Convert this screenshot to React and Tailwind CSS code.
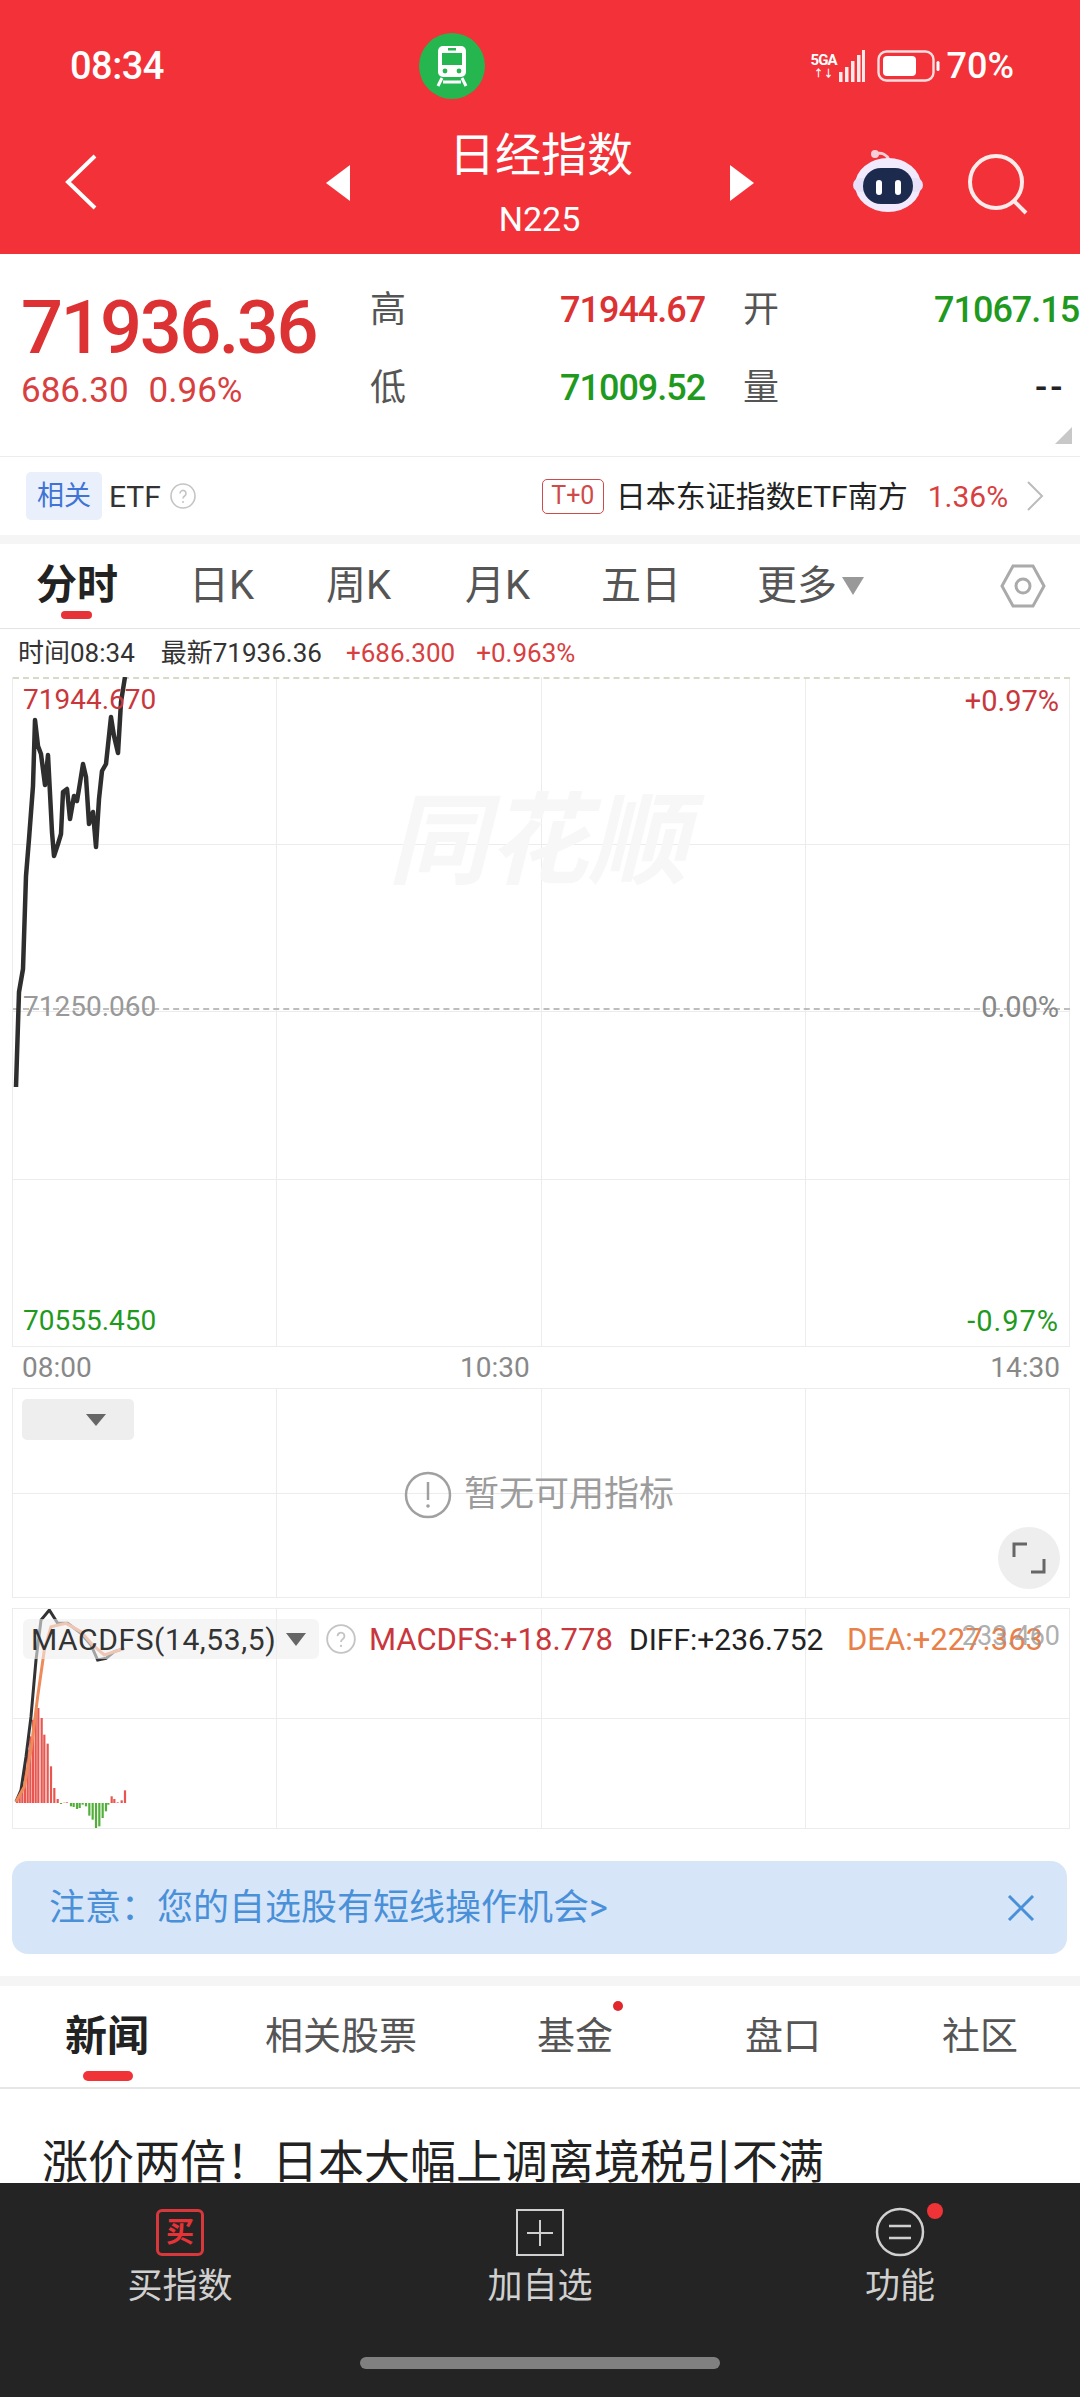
import React from "react";

const linePts =
  "15,1088 18,993 22,970 25,877 28,840 32,787 34,721 37,747 40,755 44,786 47,756 51,833 53,857 57,845 60,835 62,793 66,790 69,820 73,797 76,802 78,790 82,765 85,778 88,825 92,813 95,848 98,800 101,772 105,765 110,718 113,737 117,754 120,703 124,678";

// macd bars: [x, height] in zoomed px (3x), baseline at y=1803
const macdBars = [
  [48, 10], [56, 30], [64, 60], [72, 110], [80, 160], [88, 200], [96, 250], [104, 270], [112, 285],
  [122, 255], [130, 205], [140, 178], [150, 110], [160, 45], [170, 12], [180, -3], [190, 1], [198, 2],
  [210, -10], [218, -12], [228, -18], [236, -15], [245, -5], [255, -10], [265, -38], [275, -50],
  [285, -75], [295, -70], [305, -45], [315, -25], [322, -5], [332, 20], [340, 12], [350, 2], [362, 8], [372, 38],
];

const toPts = (arr) => arr.map(([x, y]) => `${x / 3},${1590 + y / 3}`).join(" ");
const diffLine = toPts([[45, 635], [60, 600], [75, 500], [90, 380], [105, 210], [120, 90], [145, 60], [170, 100], [200, 100], [240, 130], [270, 165], [290, 210], [315, 205], [340, 185], [370, 175]]);
const deaLine = toPts([[45, 635], [70, 590], [90, 480], [110, 320], [130, 180], [150, 110], [195, 100], [240, 125], [275, 165], [310, 195], [370, 175]]);

function GridCells({ rows }) {
  const cells = [];
  for (let i = 0; i < rows * 4; i++) {
    cells.push(<div key={i} className="border-r border-b border-[#ececec]" />);
  }
  return <>{cells}</>;
}

function HelpIcon({ size = 26 }) {
  return (
    <svg width={size} height={size} viewBox="0 0 26 26" className="shrink-0">
      <circle cx="13" cy="13" r="12" fill="none" stroke="#c4c4c4" strokeWidth="1.6" />
      <path d="M10 10.5a3 3 0 1 1 4.6 2.5c-1 .7-1.6 1.2-1.6 2.5" fill="none" stroke="#c4c4c4" strokeWidth="1.6" />
      <circle cx="13" cy="19" r="1" fill="#c4c4c4" />
    </svg>
  );
}

function StatusBar() {
  return (
    <div className="h-[132px] flex items-center text-white">
      <div className="ml-[70px] w-[100px] text-[38px] font-medium leading-none tracking-[-0.5px] whitespace-nowrap">08:34</div>
      <svg width="66" height="66" viewBox="0 0 66 66" className="ml-[249px]">
        <circle cx="33" cy="33" r="33" fill="#25b650" />
        <path d="M24 13h18a5 5 0 0 1 5 5v21a5 5 0 0 1-5 5H24a5 5 0 0 1-5-5V18a5 5 0 0 1 5-5z" fill="#fff" />
        <rect x="23" y="20" width="20" height="12" fill="#25b650" />
        <rect x="29" y="15" width="8" height="2.5" fill="#25b650" />
        <circle cx="26" cy="38" r="2.4" fill="#25b650" />
        <circle cx="40" cy="38" r="2.4" fill="#25b650" />
        <path d="M23 45l-4 8M43 45l4 8M24 49h18" stroke="#fff" strokeWidth="3" fill="none" />
      </svg>
      <div className="ml-auto mr-[66px] flex items-center">
        <div className="w-[30px] flex flex-col items-center leading-none">
          <span className="text-[15px] font-bold tracking-[-1px]">5GA</span>
          <span className="text-[10px] font-bold mt-[1px]">↑↓</span>
        </div>
        <svg width="26" height="32" viewBox="0 0 26 32" className="mr-[12px]">
          <rect x="0" y="22" width="3.5" height="10" fill="#fde8ea" />
          <rect x="6" y="17" width="3.5" height="15" fill="#fde8ea" />
          <rect x="12" y="11" width="3.5" height="21" fill="#fde8ea" />
          <rect x="18" y="5" width="3.5" height="27" fill="#fde8ea" />
          <rect x="23" y="0" width="3" height="32" fill="#fde8ea" />
        </svg>
        <svg width="64" height="32" viewBox="0 0 64 32">
          <rect x="1.5" y="1.5" width="55" height="29" rx="8" fill="none" stroke="#fcdde0" strokeWidth="2.4" />
          <rect x="6" y="6" width="33" height="20" rx="4" fill="#fff" />
          <rect x="59.5" y="11" width="3" height="10" rx="1.5" fill="#fff" />
        </svg>
        <span className="ml-[6px] text-[36px] font-medium leading-none">70%</span>
      </div>
    </div>
  );
}

function NavRow() {
  return (
    <div className="h-[122px] flex text-white">
      <svg width="34" height="56" viewBox="0 0 34 56" className="ml-[64px] mt-[22px]">
        <path d="M31 2L4 28l27 26" fill="none" stroke="#fff" strokeWidth="4" />
      </svg>
      <svg width="24" height="36" viewBox="0 0 24 36" className="ml-[228px] mt-[33px]">
        <path d="M24 0v36L0 18z" fill="#fff" />
      </svg>
      <div className="ml-[100px] w-[182px] flex flex-col items-center">
        <div className="text-[46px] leading-[46px] whitespace-nowrap">日经指数</div>
        <div className="text-[34px] leading-[38px] mt-[22px] pr-[3px]">N225</div>
      </div>
      <svg width="24" height="36" viewBox="0 0 24 36" className="ml-[98px] mt-[33px]">
        <path d="M0 0v36l24-18z" fill="#fff" />
      </svg>
      <svg width="72" height="66" viewBox="0 0 72 66" className="ml-[98px] mt-[16px]">
        <path d="M23 6c7-2 12 1 14 6" fill="none" stroke="#f7cfd8" strokeWidth="3" />
        <circle cx="23" cy="6" r="4" fill="#f7cfd8" />
        <ellipse cx="36" cy="37" rx="33" ry="27" fill="#f0eafc" />
        <rect x="1" y="30" width="70" height="14" rx="7" fill="#e6e0f8" />
        <rect x="11" y="20" width="50" height="36" rx="18" fill="#1c2a4d" />
        <rect x="24" y="32" width="6" height="15" rx="3" fill="#fff" />
        <rect x="43" y="32" width="6" height="15" rx="3" fill="#fff" />
      </svg>
      <svg width="64" height="64" viewBox="0 0 64 64" className="ml-[42px] mt-[22px]">
        <circle cx="30" cy="28" r="26" fill="none" stroke="#fdeaea" strokeWidth="4" />
        <path d="M48 47l12 12" stroke="#fdeaea" strokeWidth="4" fill="none" />
      </svg>
    </div>
  );
}

function QuoteInfo() {
  return (
    <div className="relative h-[203px] flex border-b border-[#ececec] overflow-hidden">
      <div className="w-[370px] pl-[21px] pt-[36px] shrink-0">
        <div className="text-[74px] leading-[76px] font-medium tracking-[-2.5px] text-[#dc3233]">71936.36</div>
        <div className="mt-[5px] flex text-[35px] leading-[40px] text-[#d8403f]">
          <span>686.30</span>
          <span className="ml-[20px]">0.96%</span>
        </div>
      </div>
      <div className="pt-[31px] text-[36px] leading-[50px] whitespace-nowrap">
        <div className="flex">
          <span className="w-[190px] text-[#555]">高</span>
          <span className="w-[183px] text-[#dc3233] font-medium tracking-[-1px]">71944.67</span>
          <span className="w-[191px] text-[#555]">开</span>
          <span className="text-[#1f9a1f] font-medium tracking-[-1px]">71067.15</span>
        </div>
        <div className="flex mt-[28px]">
          <span className="w-[190px] text-[#555]">低</span>
          <span className="w-[183px] text-[#1f9a1f] font-medium tracking-[-1px]">71009.52</span>
          <span className="w-[191px] text-[#555]">量</span>
          <span className="ml-[101px] text-[#222] font-medium tracking-[3px]">--</span>
        </div>
      </div>
      <svg width="17" height="17" viewBox="0 0 17 17" className="absolute left-[1055px] top-[173px]">
        <path d="M17 0v17H0z" fill="#c8c8c8" />
      </svg>
    </div>
  );
}

function EtfRow() {
  return (
    <div className="h-[78px] flex items-center">
      <div className="ml-[26px] w-[76px] h-[48px] rounded-[5px] bg-[#e9f0fb] text-[#3f74d6] text-[27px] flex items-center justify-center">
        相关
      </div>
      <span className="ml-[7px] text-[30px] text-[#333]">ETF</span>
      <div className="ml-[9px]"><HelpIcon /></div>
      <div className="ml-[346px] w-[62px] h-[35px] rounded-[5px] border border-[#cf4a4a] text-[#cf4a4a] text-[25px] flex items-center justify-center">
        T+0
      </div>
      <span className="ml-[12px] text-[30px] text-[#222] whitespace-nowrap">日本东证指数ETF南方</span>
      <span className="ml-[20px] text-[30px] text-[#d8403f]">1.36%</span>
      <svg width="18" height="30" viewBox="0 0 18 30" className="ml-[18px]">
        <path d="M2 1l14 14L2 29" fill="none" stroke="#bbb" strokeWidth="2" />
      </svg>
    </div>
  );
}

function PeriodTabs() {
  return (
    <div className="relative h-[85px] flex items-center border-b border-[#e4e4e4] text-[40px] text-[#555]">
      <div className="relative ml-[36px] w-[153px]">
        <span className="text-[41px] font-bold text-[#222]">分时</span>
        <div className="absolute left-[25px] top-[56px] w-[31px] h-[8px] rounded-full bg-[#e63338]" />
      </div>
      <span className="w-[137px]">日K</span>
      <span className="w-[139px]">周K</span>
      <span className="w-[136px]">月K</span>
      <span className="w-[156px]">五日</span>
      <span>更多</span>
      <svg width="22" height="22" viewBox="0 0 22 22" className="ml-[5px]">
        <path d="M0 2h22L11 20z" fill="#999" />
      </svg>
      <svg width="48" height="48" viewBox="0 0 48 48" className="ml-auto mr-[33px]">
        <path d="M14 4h20l11 20-11 20H14L3 24z" fill="none" stroke="#aaa" strokeWidth="3" />
        <circle cx="24" cy="24" r="7" fill="none" stroke="#aaa" strokeWidth="3" />
      </svg>
    </div>
  );
}

function PriceChart() {
  return (
    <div className="relative ml-[12px] w-[1058px] h-[670px] border-l border-[#ececec] grid grid-cols-4 grid-rows-4">
      <GridCells rows={4} />
      <div className="absolute left-0 right-0 top-0 border-t-2 border-dashed border-[#d9d9c8]" />
      <div className="absolute left-0 right-0 top-[331px] border-t-2 border-dashed border-[#bdbdbd]" />
      <div className="absolute left-[375px] top-[120px] text-[100px] leading-[90px] italic font-bold text-[#f7f7f7] whitespace-nowrap">同花顺</div>
      <svg className="absolute left-0 top-0" width="1058" height="670" viewBox="12 678 1058 670">
        <polyline points={linePts} fill="none" stroke="#2e2e2e" strokeWidth="4.5" strokeLinejoin="round" />
      </svg>
      <span className="absolute left-[10px] top-[5px] text-[28px] leading-[36px] text-[#c9373c]">71944.670</span>
      <span className="absolute left-[10px] top-[312px] text-[28px] leading-[36px] text-[#999]">71250.060</span>
      <span className="absolute left-[10px] top-[626px] text-[28px] leading-[36px] text-[#1f9a1f]">70555.450</span>
      <span className="absolute right-[11px] top-[6px] text-[29px] leading-[36px] text-[#c9373c]">+0.97%</span>
      <span className="absolute right-[11px] top-[312px] text-[29px] leading-[36px] text-[#888]">0.00%</span>
      <span className="absolute right-[11px] top-[626px] text-[29px] leading-[36px] tracking-[1px] text-[#1f9a1f]">-0.97%</span>
    </div>
  );
}

function NoIndicatorPanel() {
  return (
    <div className="relative ml-[12px] w-[1058px] h-[210px] border-l border-t border-[#ececec] grid grid-cols-4 grid-rows-2">
      <GridCells rows={2} />
      <div className="absolute left-[9px] top-[10px] w-[112px] h-[41px] rounded-[5px] bg-[#eeeeee] flex items-center pl-[64px]">
        <svg width="20" height="12" viewBox="0 0 20 12"><path d="M0 0h20L10 12z" fill="#666" /></svg>
      </div>
      <div className="absolute left-[391px] top-[80px] flex items-center">
        <svg width="48" height="48" viewBox="0 0 48 48">
          <circle cx="24" cy="24" r="22" fill="none" stroke="#a0a0a0" strokeWidth="2.5" />
          <path d="M24 11v18" stroke="#a0a0a0" strokeWidth="2.5" />
          <circle cx="24" cy="35" r="1.8" fill="#a0a0a0" />
        </svg>
        <span className="ml-[12px] text-[35px] text-[#9c9c9c] whitespace-nowrap">暂无可用指标</span>
      </div>
      <div className="absolute left-[985px] top-[138px] w-[62px] h-[62px] rounded-full bg-[#eeeeee] flex items-center justify-center">
        <svg width="34" height="32" viewBox="0 0 34 32">
          <path d="M2 15V2h13M32 17v13H19" fill="none" stroke="#666" strokeWidth="3" />
        </svg>
      </div>
    </div>
  );
}

function MacdPanel() {
  return (
    <div className="relative ml-[12px] w-[1058px] h-[221px] border-l border-t border-[#ececec] grid grid-cols-4 grid-rows-2">
      <GridCells rows={2} />
      <svg className="absolute left-0 top-0" width="1058" height="221" viewBox="12 1609 1058 221">
        {macdBars.map(([x, h], i) => (
          <rect
            key={i}
            x={x / 3 - 1.1}
            y={h > 0 ? 1803 - h / 3 : 1803}
            width="2.2"
            height={Math.abs(h) / 3}
            fill={h > 0 ? "#e8564f" : "#52b03a"}
          />
        ))}
        <polyline points={diffLine} fill="none" stroke="#333" strokeWidth="3" />
        <polyline points={deaLine} fill="none" stroke="#ef8a5a" strokeWidth="3" />
      </svg>
      <div className="absolute left-[10px] top-[10px] w-[296px] h-[40px] rounded-[6px] bg-[#efefef]/60 flex items-center pl-[8px] text-[30px] tracking-[0.6px] text-[#333] whitespace-nowrap">
        MACDFS(14,53,5)
        <svg width="20" height="13" viewBox="0 0 20 13" className="ml-[10px]"><path d="M0 0h20L10 13z" fill="#666" /></svg>
      </div>
      <div className="absolute left-[313px] top-[15px]"><HelpIcon size={30} /></div>
      <div className="absolute left-[356px] top-[11px] flex text-[31px] leading-[40px] whitespace-nowrap">
        <span className="w-[260px] text-[#c9373c]">MACDFS:+18.778</span>
        <span className="w-[218px] text-[30px] text-[#222]">DIFF:+236.752</span>
        <span className="text-[#e8804a]">DEA:+227.363</span>
      </div>
      <span className="absolute right-[10px] top-[9px] text-[27px] leading-[36px] text-[#999]/80">233.460</span>
    </div>
  );
}

function NewsTabs() {
  return (
    <div className="relative h-[103px] flex items-center border-b-2 border-[#e6e6e6] text-[38px] text-[#555]">
      <div className="relative ml-[65px] w-[200px]">
        <span className="text-[42px] font-bold text-[#222]">新闻</span>
        <div className="absolute left-[18px] top-[66px] w-[50px] h-[10px] rounded-full bg-[#f03337]" />
      </div>
      <span className="w-[272px]">相关股票</span>
      <div className="relative w-[208px]">
        基金
        <div className="absolute left-[76px] top-[-7px] w-[10px] h-[10px] rounded-full bg-[#e0282c]" />
      </div>
      <span className="w-[197px]">盘口</span>
      <span>社区</span>
    </div>
  );
}

function BottomBar() {
  return (
    <div className="h-[214px] shrink-0 bg-[#242424] flex flex-col">
      <div className="grid grid-cols-3 pt-[26px]">
        <div className="flex flex-col items-center">
          <div className="w-[48px] h-[47px] rounded-[6px] border-[3px] border-[#d8373b] text-[#e63338] text-[28px] font-bold flex items-center justify-center">
            买
          </div>
          <span className="mt-[8px] text-[35px] leading-[46px] text-[#d0d0d0]">买指数</span>
        </div>
        <div className="flex flex-col items-center">
          <div className="w-[48px] h-[47px] border-[2px] border-[#d0d0d0] flex items-center justify-center">
            <svg width="26" height="26" viewBox="0 0 26 26"><path d="M13 0v26M0 13h26" stroke="#d0d0d0" strokeWidth="2" /></svg>
          </div>
          <span className="mt-[8px] text-[35px] leading-[46px] text-[#d0d0d0]">加自选</span>
        </div>
        <div className="flex flex-col items-center">
          <div className="relative w-[50px] h-[47px]">
            <svg width="50" height="50" viewBox="0 0 50 50" className="mt-[-2px]">
              <circle cx="25" cy="25" r="23" fill="none" stroke="#d0d0d0" strokeWidth="2.5" />
              <path d="M14 19h22M14 31h22" stroke="#d0d0d0" strokeWidth="2.5" />
            </svg>
            <div className="absolute left-[52px] top-[-6px] w-[16px] h-[16px] rounded-full bg-[#f03337]" />
          </div>
          <span className="mt-[8px] text-[35px] leading-[46px] text-[#d0d0d0]">功能</span>
        </div>
      </div>
      <div className="mt-[47px] mx-auto w-[360px] h-[12px] rounded-full bg-[#808080]" />
    </div>
  );
}

export default function App() {
  return (
    <div className="w-[1080px] h-[2397px] overflow-hidden flex flex-col bg-white font-['Roboto','Noto_Sans_CJK_SC',sans-serif]">
      <div className="flex-1 min-h-0 overflow-hidden">
        <div className="h-[254px] bg-[#f23238]">
          <StatusBar />
          <NavRow />
        </div>
        <QuoteInfo />
        <EtfRow />
        <div className="h-[9px] bg-[#f5f5f5]" />
        <PeriodTabs />
        <div className="h-[48px] flex items-center pl-[18px] text-[26px] whitespace-nowrap">
          <span className="text-[#333]">时间08:34</span>
          <span className="ml-[26px] text-[#333]">最新71936.36</span>
          <span className="ml-[24px] text-[#d8403f]">+686.300</span>
          <span className="ml-[21px] text-[#d8403f]">+0.963%</span>
        </div>
        <PriceChart />
        <div className="h-[41px] flex items-center pl-[22px] pr-[20px] text-[28px] text-[#888]">
          <span className="w-[438px]">08:00</span>
          <span>10:30</span>
          <span className="ml-auto">14:30</span>
        </div>
        <NoIndicatorPanel />
        <div className="h-[10px]" />
        <MacdPanel />
        <div className="mt-[32px] mx-[12px] h-[93px] w-[1055px] rounded-[16px] bg-[#d6e6f8] flex items-center pl-[37px] pr-[32px] text-[36px] text-[#4a90d9]">
          <span>注意：您的自选股有短线操作机会&gt;</span>
          <svg width="28" height="26" viewBox="0 0 28 26" className="ml-auto">
            <path d="M2 1l24 24M26 1L2 25" stroke="#4a90d9" strokeWidth="3" />
          </svg>
        </div>
        <div className="h-[22px]" />
        <div className="h-[10px] bg-[#f5f5f5]" />
        <NewsTabs />
        <div className="pl-[42px] pt-[45px] text-[46px] leading-[56px] text-[#222] whitespace-nowrap">
          涨价两倍！日本大幅上调离境税引不满
        </div>
      </div>
      <BottomBar />
    </div>
  );
}
